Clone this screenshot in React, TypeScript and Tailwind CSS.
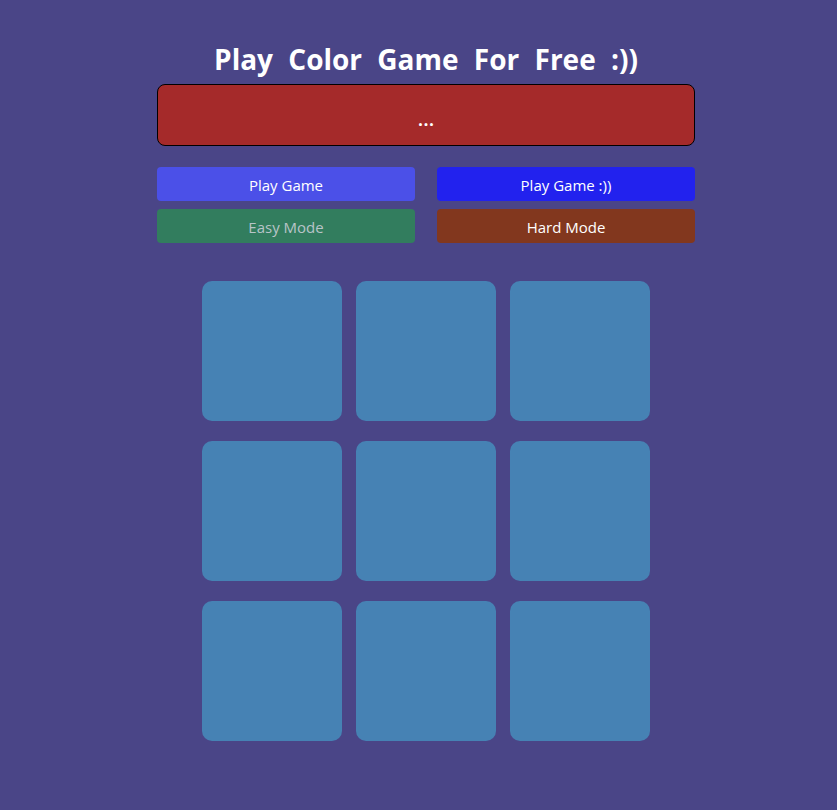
const tiles = Array.from({ length: 9 }, (_, i) => i);

const App = () => {
  return (
    <div
      className="min-h-[810px] w-full bg-[#4a4587] pt-[39px]"
      style={{ fontFamily: '"Open Sans", "Noto Sans", sans-serif' }}
    >
      <div className="ml-[157px] w-[538px]">
        <h1 className="text-center text-[28px] font-bold leading-[40px] text-white [word-spacing:8px]">
          Play Color Game For Free :))
        </h1>
        <div className="mt-[5px] flex h-[62px] items-center justify-center rounded-[8px] border border-black bg-[#a52a2a] pt-[8px] text-[20px] font-semibold text-white">
          ...
        </div>

        <div className="mt-[21px] grid grid-cols-2 gap-x-[22px] gap-y-[8px]">
          <button className="h-[34px] rounded-[4px] bg-[#4b50e8] pt-[2px] text-[15px] text-white">Play Game</button>
          <button className="h-[34px] rounded-[4px] bg-[#2222ee] pt-[2px] text-[15px] text-white">Play Game :))</button>
          <button className="h-[34px] rounded-[4px] bg-[#327d5e] pt-[2px] text-[15px] text-[#b8c4c8]">Easy Mode</button>
          <button className="h-[34px] rounded-[4px] bg-[#82371e] pt-[2px] text-[15px] text-white">Hard Mode</button>
        </div>
      </div>

      <div className="ml-[202px] mt-[38px] grid w-[448px] grid-cols-3 gap-x-[14px] gap-y-[20px]">
        {tiles.map((t) => (
          <div key={t} className="h-[140px] w-[140px] rounded-[10px] bg-[#4682b4]" />
        ))}
      </div>
    </div>
  );
};

export default App;
